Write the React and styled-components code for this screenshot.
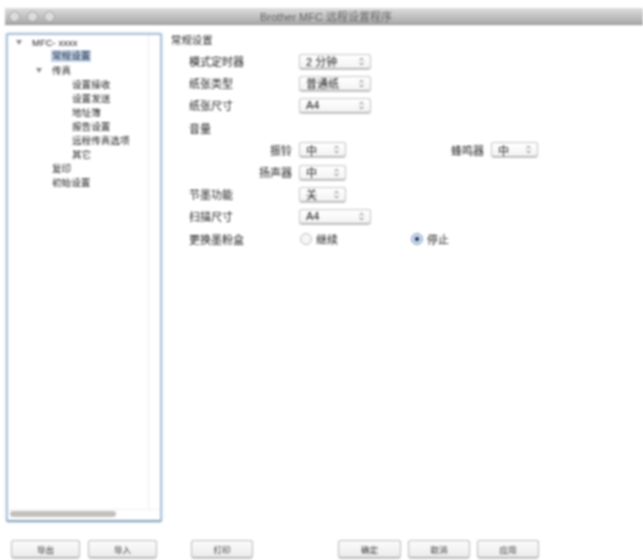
import styled, { createGlobalStyle } from "styled-components";

const GlobalStyle = createGlobalStyle`
  html, body { margin: 0; padding: 0; background: #fff; }
  body { font-family: "Liberation Sans", "Noto Sans CJK SC", sans-serif; color: #2e2e2e; }
`;

const Page = styled.div`
  width: 643px;
  height: 560px;
  overflow: hidden;
  padding-top: 8px;
  box-sizing: border-box;
  display: flex;
  flex-direction: column;
  filter: blur(0.9px);
`;

const TitleBar = styled.div`
  height: 16px;
  margin-left: 5px;
  display: flex;
  align-items: center;
  padding-left: 4px;
  background: linear-gradient(#dedede, #a9a9a9);
  border-bottom: 1px solid #8f8f8f;
  position: relative;
`;

const Light = styled.span`
  width: 9px;
  height: 9px;
  border-radius: 50%;
  border: 1px solid #a2a2a2;
  background: #dcdcdc;
  margin-right: 6.5px;
`;

const Title = styled.div`
  position: absolute;
  left: 254px;
  width: 134px;
  text-align: center;
  font-size: 11px;
  color: #666;
  white-space: nowrap;
`;

const Main = styled.div`
  display: flex;
  margin-top: 8px;
  height: 489px;
`;

const TreePanel = styled.div`
  width: 156px;
  margin-left: 6px;
  box-sizing: border-box;
  border: 2px solid #a8c0d8;
  border-bottom-color: #86a1bb;
  border-radius: 2px;
  box-shadow: 0 0 3px #c6d8ea;
  display: flex;
  flex-direction: column;
  position: relative;
`;

const TreeRow = styled.div`
  height: 14px;
  display: flex;
  align-items: center;
  padding-left: ${(p) => p.$indent}px;
  font-size: ${(p) => p.$size || 9.6}px;
  color: #222;
  white-space: nowrap;
`;

const Arrow = styled.span`
  width: 0;
  height: 0;
  border-left: 3px solid transparent;
  border-right: 3px solid transparent;
  border-top: 5px solid #8a8a8a;
  margin-left: ${(p) => p.$left}px;
  margin-right: ${(p) => p.$right}px;
`;

const Selected = styled.span`
  background: #c4d4e8;
  color: #1c2840;
  padding: 0 1px;
  line-height: 12px;
`;

const TreeEdge = styled.div`
  position: absolute;
  right: 11px;
  top: 0;
  bottom: 12px;
  width: 1px;
  background: #ececec;
`;

const ScrollTrack = styled.div`
  margin-top: auto;
  height: 8px;
  margin-bottom: 2px;
  padding: 0 2px;
  border-top: 1px solid #f0f0f0;
`;

const ScrollThumb = styled.div`
  width: 106px;
  height: 6px;
  margin-top: 1px;
  border-radius: 3px;
  background: #c3bfba;
`;

const Content = styled.div`
  margin-left: 9px;
  flex: 1;
  display: flex;
  flex-direction: column;
`;

const Heading = styled.div`
  font-size: 10.4px;
  height: 16px;
  line-height: 16px;
  color: #222;
`;

const Settings = styled.div`
  margin-left: 18px;
  margin-top: 1px;
  display: flex;
  flex-direction: column;
`;

const Row = styled.div`
  height: 22.2px;
  display: flex;
  align-items: center;
`;

const Label = styled.div`
  width: ${(p) => p.$width || 110}px;
  box-sizing: border-box;
  font-size: 11px;
  color: #222;
  white-space: nowrap;
  text-align: ${(p) => (p.$right ? "right" : "left")};
  padding-right: ${(p) => (p.$right ? 7 : 0)}px;
`;

const SelectBox = styled.div`
  width: ${(p) => p.$width}px;
  height: 15px;
  box-sizing: border-box;
  border: 1px solid #c6c6c6;
  border-bottom-color: #a8a8a8;
  border-radius: 3px;
  background: linear-gradient(#fff, #f3f3f3);
  box-shadow: 0 1px 1px #d0d0d0;
  display: flex;
  align-items: center;
  justify-content: space-between;
  padding: 0 6px;
  font-size: 11px;
  color: #222;
  white-space: nowrap;
`;

const Option = styled.label`
  width: ${(p) => p.$width}px;
  display: flex;
  align-items: center;
  gap: 4px;
  font-size: 11px;
  color: #222;
`;

const Radio = styled.span`
  width: 12px;
  height: 12px;
  margin-left: 1px;
  box-sizing: border-box;
  border-radius: 50%;
  border: 1px solid ${(p) => (p.$on ? "#7f9fc4" : "#bcbcbc")};
  background: ${(p) => (p.$on ? "#c9d9ec" : "#f6f6f6")};
  display: flex;
  align-items: center;
  justify-content: center;
`;

const Dot = styled.span`
  width: 4px;
  height: 4px;
  border-radius: 50%;
  background: #14263f;
`;

const Footer = styled.div`
  margin-top: 18px;
  padding-left: 11px;
  display: flex;
  align-items: center;
`;

const Button = styled.div`
  width: ${(p) => p.$width}px;
  height: 18px;
  margin-left: ${(p) => p.$gap}px;
  box-sizing: border-box;
  border: 1px solid #bcbcbc;
  border-bottom-color: #a2a2a2;
  border-radius: 3px;
  background: linear-gradient(#fbfbfb, #ececec);
  box-shadow: 0 1px 1px #d6d6d6;
  display: flex;
  align-items: center;
  justify-content: center;
  font-size: 8.5px;
  color: #333;
`;

function Stepper() {
  return (
    <svg width="5" height="9" viewBox="0 0 5 9">
      <path d="M.8 3.4 2.5 1l1.7 2.4M.8 5.6 2.5 8l1.7-2.4" fill="none" stroke="#777" strokeWidth="1" />
    </svg>
  );
}

function Select({ value, width }) {
  return (
    <SelectBox $width={width}>
      <span>{value}</span>
      <Stepper />
    </SelectBox>
  );
}

export default function App() {
  return (
    <Page>
      <GlobalStyle />
      <TitleBar>
        <Light />
        <Light />
        <Light />
        <Title>Brother MFC 远程设置程序</Title>
      </TitleBar>
      <Main>
        <TreePanel>
          <TreeRow $indent={6} $size={9.5}>
            <Arrow $left={2} $right={10} />
            MFC- xxxx
          </TreeRow>
          <TreeRow $indent={43}><Selected>常规设置</Selected></TreeRow>
          <TreeRow $indent={28}>
            <Arrow $left={0} $right={10} />
            传真
          </TreeRow>
          <TreeRow $indent={64}>设置接收</TreeRow>
          <TreeRow $indent={64}>设置发送</TreeRow>
          <TreeRow $indent={64}>地址簿</TreeRow>
          <TreeRow $indent={64}>报告设置</TreeRow>
          <TreeRow $indent={64}>远程传真选项</TreeRow>
          <TreeRow $indent={64}>其它</TreeRow>
          <TreeRow $indent={44}>复印</TreeRow>
          <TreeRow $indent={44}>初始设置</TreeRow>
          <TreeEdge />
          <ScrollTrack><ScrollThumb /></ScrollTrack>
        </TreePanel>
        <Content>
          <Heading>常规设置</Heading>
          <Settings>
            <Row><Label>模式定时器</Label><Select value="2 分钟" width={72} /></Row>
            <Row><Label>纸张类型</Label><Select value="普通纸" width={72} /></Row>
            <Row><Label>纸张尺寸</Label><Select value="A4" width={72} /></Row>
            <Row><Label>音量</Label></Row>
            <Row>
              <Label $right>振铃</Label>
              <Select value="中" width={47} />
              <Label $right $width={145}>蜂鸣器</Label>
              <Select value="中" width={47} />
            </Row>
            <Row><Label $right>扬声器</Label><Select value="中" width={47} /></Row>
            <Row><Label>节墨功能</Label><Select value="关" width={47} /></Row>
            <Row><Label>扫描尺寸</Label><Select value="A4" width={72} /></Row>
            <Row>
              <Label>更换墨粉盒</Label>
              <Option $width={111}><Radio />继续</Option>
              <Option $width={60}><Radio $on><Dot /></Radio>停止</Option>
            </Row>
          </Settings>
        </Content>
      </Main>
      <Footer>
        <Button $width={69} $gap={0}>导出</Button>
        <Button $width={69} $gap={8}>导入</Button>
        <Button $width={62} $gap={34}>打印</Button>
        <Button $width={63} $gap={85}>确定</Button>
        <Button $width={62} $gap={7}>取消</Button>
        <Button $width={62} $gap={7}>应用</Button>
      </Footer>
    </Page>
  );
}
